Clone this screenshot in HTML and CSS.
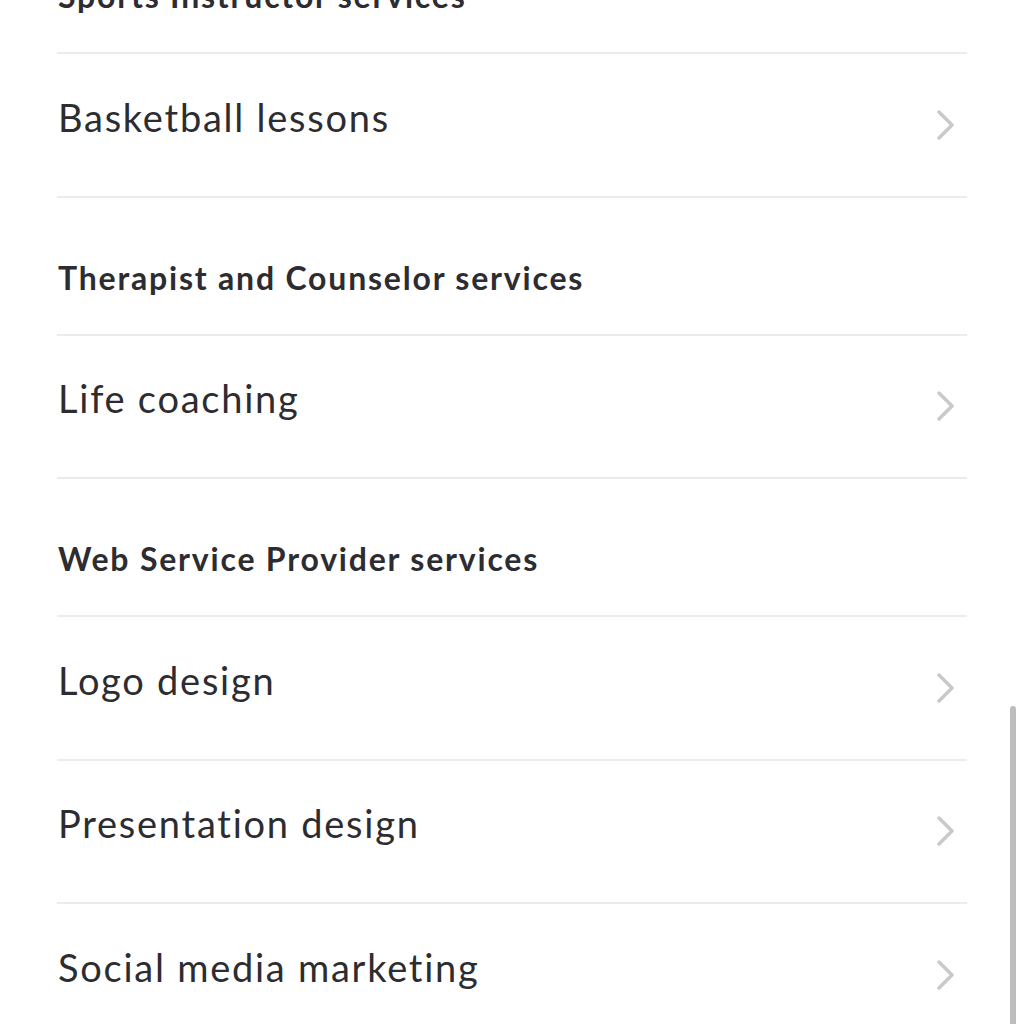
FILE: index.html
```html
<html lang="en">
  <head>
    <meta charset="UTF-8" />
    <meta name="viewport" content="width=device-width, initial-scale=1.0" />
    <title>Services</title>
    <link rel="stylesheet" href="styles.css">
  </head>
  <body>
    <div class="container">
      <div class="group-title">Sports Instructor services</div>
      <div class="item">
        <span class="item-name">Basketball lessons</span>
        <svg class="chevron" width="18" height="30" viewBox="0 0 18 30"><polyline points="2,2 15,15 2,28" /></svg>
      </div>

      <div class="group-title">Therapist and Counselor services</div>
      <div class="item">
        <span class="item-name">Life coaching</span>
        <svg class="chevron" width="18" height="30" viewBox="0 0 18 30"><polyline points="2,2 15,15 2,28" /></svg>
      </div>

      <div class="group-title">Web Service Provider services</div>
      <div class="item">
        <span class="item-name">Logo design</span>
        <svg class="chevron" width="18" height="30" viewBox="0 0 18 30"><polyline points="2,2 15,15 2,28" /></svg>
      </div>
      <div class="item">
        <span class="item-name">Presentation design</span>
        <svg class="chevron" width="18" height="30" viewBox="0 0 18 30"><polyline points="2,2 15,15 2,28" /></svg>
      </div>
      <div class="item">
        <span class="item-name">Social media marketing</span>
        <svg class="chevron" width="18" height="30" viewBox="0 0 18 30"><polyline points="2,2 15,15 2,28" /></svg>
      </div>
    </div>

    <div class="scrollbar"></div>
  </body>
</html>
```

FILE: styles.css
```css
body {
  background-color: #fff;
  color: #2c2c31;
  font-family: "Lato", "Noto Sans", sans-serif;
  height: 1024px;
  margin: 0;
  overflow: hidden;
}

.container {
  margin-left: 57px;
  margin-top: -84px;
  width: 910px;
}

.group-title {
  align-items: flex-end;
  border-bottom: 2px solid #ebebeb;
  box-sizing: border-box;
  display: flex;
  font-size: 32px;
  font-weight: 700;
  height: 138px;
  letter-spacing: 1.8px;
  line-height: 40px;
  padding-bottom: 36px;
  padding-left: 1px;
}

.item {
  align-items: center;
  border-bottom: 2px solid #ebebeb;
  box-sizing: border-box;
  display: flex;
  height: 143.5px;
  justify-content: space-between;
  padding-left: 1px;
  padding-right: 12px;
}

.item-name {
  font-size: 38px;
  font-weight: 400;
  letter-spacing: 1.75px;
  line-height: 44px;
  padding-bottom: 16px;
}

.chevron {
  fill: none;
  stroke: #c9c9c9;
  stroke-linecap: round;
  stroke-linejoin: round;
  stroke-width: 3.5;
}

.scrollbar {
  background-color: #bdbdbd;
  border-radius: 3px;
  height: 330px;
  position: fixed;
  right: 8px;
  top: 706px;
  width: 6px;
}
```
